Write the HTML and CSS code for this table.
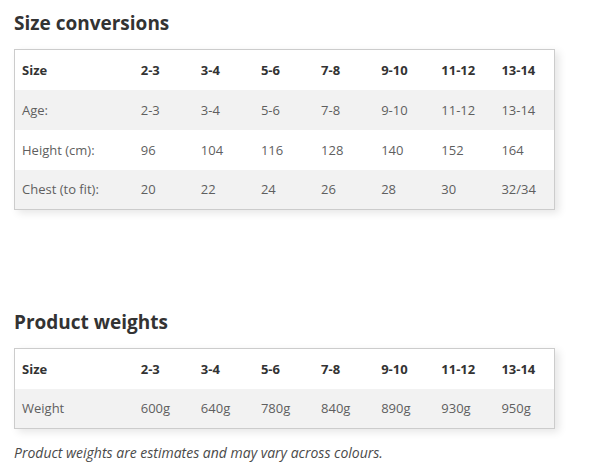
FILE: index.html
```html
<!DOCTYPE html>
<html>
<head>
<meta charset="utf-8">
<link rel="stylesheet" href="styles.css">
</head>
<body>
<section class="block">
  <h2 class="title">Size conversions</h2>
  <table class="sizes">
    <tr class="head"><th>Size</th><th>2-3</th><th>3-4</th><th>5-6</th><th>7-8</th><th>9-10</th><th>11-12</th><th>13-14</th></tr>
    <tr class="alt"><td>Age:</td><td>2-3</td><td>3-4</td><td>5-6</td><td>7-8</td><td>9-10</td><td>11-12</td><td>13-14</td></tr>
    <tr><td>Height (cm):</td><td>96</td><td>104</td><td>116</td><td>128</td><td>140</td><td>152</td><td>164</td></tr>
    <tr class="alt"><td>Chest (to fit):</td><td>20</td><td>22</td><td>24</td><td>26</td><td>28</td><td>30</td><td>32/34</td></tr>
  </table>
</section>
<section class="block second">
  <h2 class="title">Product weights</h2>
  <table class="sizes">
    <tr class="head"><th>Size</th><th>2-3</th><th>3-4</th><th>5-6</th><th>7-8</th><th>9-10</th><th>11-12</th><th>13-14</th></tr>
    <tr class="alt"><td>Weight</td><td>600g</td><td>640g</td><td>780g</td><td>840g</td><td>890g</td><td>930g</td><td>950g</td></tr>
  </table>
  <p class="note">Product weights are estimates and may vary across colours.</p>
</section>
</body>
</html>
```
FILE: styles.css
```css
html, body {
  margin: 0;
  padding: 0;
  background: #fff;
}
body {
  font-family: "Open Sans", "Liberation Sans", sans-serif;
  color: #5f5f5f;
  padding: 0 14px;
}
.block {
  padding-top: 10px;
}
.second {
  padding-top: 99px;
}
.title {
  margin: 0 0 13px 0;
  font-size: 19px;
  line-height: 26px;
  font-weight: 700;
  color: #333;
}
.sizes {
  border-collapse: collapse;
  border: 1px solid #ccc;
  box-shadow: 4px 3px 8px rgba(0, 0, 0, 0.1);
  font-size: 13px;
  width: 541px;
}
.sizes th, .sizes td {
  height: 40px;
  padding: 0 0 0 7px;
  text-align: left;
  box-sizing: border-box;
  width: 60px;
}
.sizes th:first-child, .sizes td:first-child {
  width: 119px;
}
.sizes th {
  font-weight: 700;
  color: #333;
}
.alt {
  background: #f2f2f2;
}
.note {
  margin: 14px 0 0 0;
  font-size: 14px;
  font-style: italic;
  color: #4a4a4a;
}
```
